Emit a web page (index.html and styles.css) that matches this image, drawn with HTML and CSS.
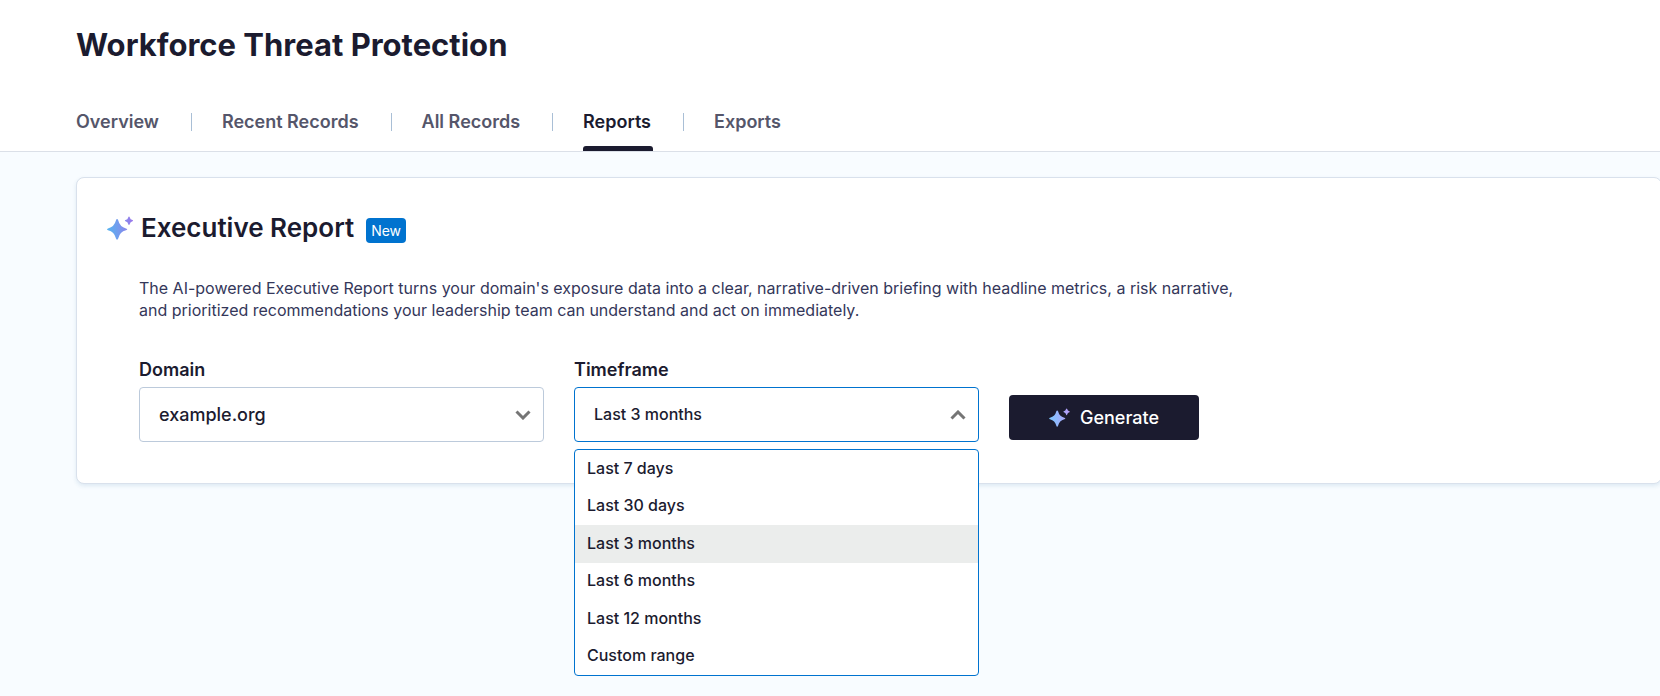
FILE: index.html
```html
<!DOCTYPE html>
<html lang="en">

<head>
  <meta charset="UTF-8">
  <meta name="viewport" content="width=device-width, initial-scale=1.0">
  <title>Workforce Threat Protection</title>
  <link rel="stylesheet" href="styles.css">
</head>

<body>
  <header class="page-header">
    <h1>Workforce Threat Protection</h1>
    <nav class="tabs">
      <a href="#overview">Overview</a>
      <a href="#recent">Recent Records</a>
      <a href="#all">All Records</a>
      <a href="#reports" class="active" aria-current="page">Reports</a>
      <a href="#exports">Exports</a>
    </nav>
  </header>

  <main>
    <section class="card">
      <div class="card-title">
        <svg class="sparkle" viewBox="0 0 26 24" aria-hidden="true">
          <defs>
            <linearGradient id="sparkleTitle" gradientUnits="userSpaceOnUse" x1="0" y1="12" x2="26" y2="10">
              <stop offset="0" stop-color="#56b4f0" />
              <stop offset="1" stop-color="#9a78ea" />
            </linearGradient>
          </defs>
          <path fill="url(#sparkleTitle)" d="M10 3Q10.800 3 11.200 4.200Q12.800 10.800 19 12.400Q20.300 12.800 20.300 13.300Q20.300 13.800 19 14.200Q12.800 15.800 11.200 22.400Q10.800 23.600 10 23.600Q9.400 23.600 9 22.400Q7.400 15.800 1 14.200Q0 13.800 0 13.300Q0 12.800 1 12.400Q7.400 10.800 9 4.200Q9.400 3 10 3Z" />
          <path fill="url(#sparkleTitle)" d="M22 .5Q22.500 .5 22.700 1.200Q23.200 3.500 25.500 4.100Q26 4.300 26 4.700Q26 5.100 25.500 5.300Q23.200 5.900 22.700 8.200Q22.500 9 22 9Q21.500 9 21.300 8.200Q20.800 5.900 18.500 5.300Q17.900 5.100 17.900 4.700Q17.900 4.300 18.500 4.100Q20.800 3.500 21.300 1.200Q21.500 .5 22 .5Z" />
        </svg>
        <h2>Executive Report</h2>
        <span class="badge">New</span>
      </div>

      <div class="card-body">
        <p>The AI-powered Executive Report turns your domain's exposure data into a clear, narrative-driven briefing with headline metrics, a risk narrative, and prioritized recommendations your leadership team can understand and act on immediately.</p>

        <form class="report-form" onsubmit="return false">
          <div class="field">
            <label for="domain">Domain</label>
            <div class="select-box">
              <select id="domain" class="domain-select">
                <option>example.org</option>
              </select>
              <svg class="chevron" viewBox="0 0 16 10" aria-hidden="true"><path d="M1.500 1.500L8 8L14.500 1.500" /></svg>
            </div>
          </div>

          <div class="field">
            <label for="timeframe">Timeframe</label>
            <div class="select-box open">
              <select id="timeframe">
                <option>Last 7 days</option>
                <option>Last 30 days</option>
                <option selected>Last 3 months</option>
                <option>Last 6 months</option>
                <option>Last 12 months</option>
                <option>Custom range</option>
              </select>
              <svg class="chevron" viewBox="0 0 16 10" aria-hidden="true"><path d="M1.500 8.500L8 2L14.500 8.500" /></svg>
              <ul class="menu" role="listbox" aria-label="Timeframe">
                <li role="option">Last 7 days</li>
                <li role="option">Last 30 days</li>
                <li role="option" aria-selected="true">Last 3 months</li>
                <li role="option">Last 6 months</li>
                <li role="option">Last 12 months</li>
                <li role="option">Custom range</li>
              </ul>
            </div>
          </div>

          <button type="submit" class="generate">
            <svg class="sparkle" viewBox="0 0 26 24" aria-hidden="true">
              <defs>
                <linearGradient id="sparkleButton" gradientUnits="userSpaceOnUse" x1="0" y1="12" x2="26" y2="10">
                  <stop offset="0" stop-color="#7cc8ff" />
                  <stop offset="1" stop-color="#b89cfa" />
                </linearGradient>
              </defs>
              <path fill="url(#sparkleButton)" d="M10 3Q10.800 3 11.200 4.200Q12.800 10.800 19 12.400Q20.300 12.800 20.300 13.300Q20.300 13.800 19 14.200Q12.800 15.800 11.200 22.400Q10.800 23.600 10 23.600Q9.400 23.600 9 22.400Q7.400 15.800 1 14.200Q0 13.800 0 13.300Q0 12.800 1 12.400Q7.400 10.800 9 4.200Q9.400 3 10 3Z" />
              <path fill="url(#sparkleButton)" d="M22 .5Q22.500 .5 22.700 1.200Q23.200 3.500 25.500 4.100Q26 4.300 26 4.700Q26 5.100 25.500 5.300Q23.200 5.900 22.700 8.200Q22.500 9 22 9Q21.500 9 21.300 8.200Q20.800 5.900 18.500 5.300Q17.900 5.100 17.900 4.700Q17.900 4.300 18.500 4.100Q20.800 3.500 21.300 1.200Q21.500 .5 22 .5Z" />
            </svg>
            Generate
          </button>
        </form>
      </div>
    </section>
  </main>

  <script>
    const timeframe = document.getElementById('timeframe');
    const items = document.querySelectorAll('.menu li');

    items.forEach((item, i) => {
      item.addEventListener('click', () => {
        timeframe.selectedIndex = i;
        items.forEach(el => el.removeAttribute('aria-selected'));
        item.setAttribute('aria-selected', 'true');
      });
    });
  </script>
</body>

</html>
```
FILE: styles.css
```css
* {
  box-sizing: border-box;
}

body {
  margin: 0;
  min-height: 100vh;
  font-family: Inter, "Open Sans", sans-serif;
  font-size: 16px;
  color: #1b1b2f;
  background-color: #f8fcff;
  overflow-x: hidden;
}

h1,
h2,
p {
  margin: 0;
}

.page-header {
  padding: 25px 76px 0;
  background-color: white;
  border-bottom: 1px solid #dbe0e8;
}

h1 {
  font-size: 31px;
  font-weight: 700;
  line-height: 40px;
}

.tabs {
  display: flex;
  flex-wrap: wrap;
  margin-top: 38px;
}

.tabs a {
  display: flex;
  height: 48px;
  padding: 6px 2px 0 0;
  font-size: 18px;
  font-weight: 600;
  line-height: 26px;
  color: #55566a;
  text-decoration: none;
}

.tabs a.active {
  color: #1b1b2f;
  position: relative;
}

.tabs a.active::after {
  content: '';
  position: absolute;
  left: 0;
  right: 0;
  bottom: 0;
  height: 5px;
  background-color: #1b1b2f;
  border-radius: 3px 3px 0 0;
}

/* divider between tabs */
.tabs a + a {
  margin-left: 61px;
}

.tabs a + a::before {
  content: '';
  width: 1px;
  height: 18px;
  margin: 4px 30px 0 -31px;
  background-color: #a9bfd6;
}

main {
  padding: 25px 0 25px 76px;
}

.card {
  margin-right: -2px;
  padding: 32px 30px 41px;
  background-color: white;
  border: 1px solid #d9e1ec;
  border-radius: 8px;
  box-shadow: 0 2px 4px rgba(30, 100, 160, 0.12);
}

.card-title {
  display: flex;
  align-items: center;
}

.card-title .sparkle {
  width: 26px;
  height: 24px;
  margin-right: 8px;
}

h2 {
  font-size: 26px;
  font-weight: 600;
  line-height: 36px;
}

.badge {
  margin: 4px 0 0 12px;
  padding: 0 5px;
  font-size: 14px;
  line-height: 25px;
  color: white;
  background-color: #0073cf;
  border-radius: 4px;
}

.card-body {
  margin: 31px 0 0 32px;
}

.card-body p {
  max-width: 1100px;
  line-height: 22px;
  color: #34375a;
}

.report-form {
  display: flex;
  flex-wrap: wrap;
  align-items: flex-end;
  gap: 30px;
  margin-top: 36px;
}

.field {
  width: 405px;
}

.field label {
  display: block;
  margin-bottom: 4px;
  font-size: 18px;
  font-weight: 600;
  line-height: 26px;
}

.select-box {
  position: relative;
}

select {
  display: block;
  width: 100%;
  height: 55px;
  padding: 0 50px 2px 19px;
  font: inherit;
  font-weight: 500;
  color: #1b1b2f;
  background-color: white;
  border: 1px solid #bccadb;
  border-radius: 4px;
  appearance: none;
}

.domain-select {
  padding-bottom: 0;
  font-size: 18px;
}

.open select {
  border-color: #0073cf;
}

.chevron {
  position: absolute;
  top: 23px;
  right: 13px;
  width: 16px;
  height: 10px;
  fill: none;
  stroke: #757575;
  stroke-width: 3;
  pointer-events: none;
}

.menu {
  position: absolute;
  top: calc(100% + 7px);
  left: 0;
  right: 0;
  z-index: 1;
  display: grid;
  grid-auto-rows: 1fr;
  height: 227px;
  margin: 0;
  padding: 0;
  font-weight: 500;
  list-style-type: none;
  background-color: white;
  border: 1px solid #0073cf;
  border-radius: 4px;
  overflow: hidden;
}

.menu li {
  display: flex;
  align-items: center;
  padding: 0 12px 2px;
  cursor: pointer;
}

.menu li[aria-selected="true"] {
  background-color: #ebedec;
}

.generate {
  display: flex;
  align-items: center;
  justify-content: center;
  gap: 10px;
  width: 190px;
  height: 45px;
  margin-bottom: 2px;
  font: inherit;
  font-size: 18px;
  font-weight: 500;
  color: white;
  background-color: #1b1b2f;
  border: none;
  border-radius: 4px;
  cursor: pointer;
}

.generate .sparkle {
  width: 21px;
  height: 19px;
}
```
